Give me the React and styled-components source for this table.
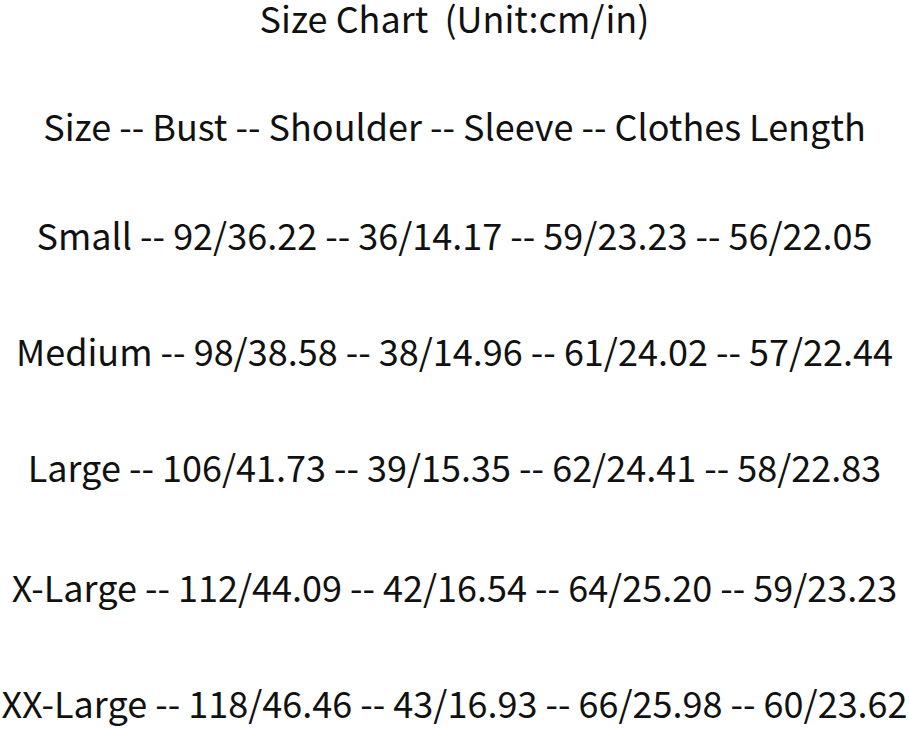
import React from 'react';
import styled, { createGlobalStyle } from 'styled-components';

const GlobalStyle = createGlobalStyle`
  html, body {
    margin: 0;
    padding: 0;
    background: #ffffff;
  }
`;

const Page = styled.div`
  width: 909px;
  height: 729px;
  overflow: hidden;
  display: flex;
  flex-direction: column;
  align-items: center;
  font-family: "Noto Sans CJK SC", "Noto Sans", sans-serif;
  color: #111;
`;

const Line = styled.div`
  font-size: 36px;
  line-height: 44px;
  white-space: nowrap;
  text-align: center;
  margin-top: ${({ $top }) => $top}px;
`;

const rows = [
  { text: 'Size Chart\u00a0 (Unit:cm/in)', top: -5 },
  { text: 'Size -- Bust -- Shoulder -- Sleeve -- Clothes Length', top: 64 },
  { text: 'Small -- 92/36.22 -- 36/14.17 -- 59/23.23 -- 56/22.05', top: 65 },
  { text: 'Medium -- 98/38.58 -- 38/14.96 -- 61/24.02 -- 57/22.44', top: 72 },
  { text: 'Large -- 106/41.73 -- 39/15.35 -- 62/24.41 -- 58/22.83', top: 72 },
  { text: 'X-Large -- 112/44.09 -- 42/16.54 -- 64/25.20 -- 59/23.23', top: 76 },
  { text: 'XX-Large -- 118/46.46 -- 43/16.93 -- 66/25.98 -- 60/23.62', top: 72 },
];

export default function App() {
  return (
    <>
      <GlobalStyle />
      <Page>
        {rows.map((r) => (
          <Line key={r.text} $top={r.top}>
            {r.text}
          </Line>
        ))}
      </Page>
    </>
  );
}
